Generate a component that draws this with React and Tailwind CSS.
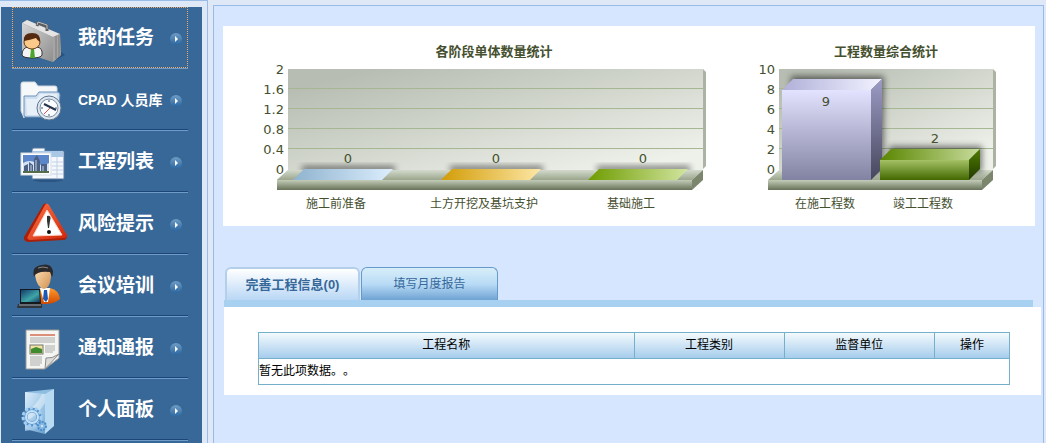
// src/App.jsx
import { useState } from 'react';

const MENU_ITEMS = [
  { label: '我的任务', icon: BriefcaseIcon },
  { label: 'CPAD 人员库', icon: FolderClockIcon, small: true },
  { label: '工程列表', icon: ProjectsIcon },
  { label: '风险提示', icon: WarningIcon },
  { label: '会议培训', icon: MeetingIcon },
  { label: '通知通报', icon: NoticeIcon },
  { label: '个人面板', icon: PanelIcon },
];

const STAGE_CHART = {
  id: 'stage',
  title: '各阶段单体数量统计',
  titleX: 271,
  width: 517,
  wallX: 65,
  wallWidth: 415,
  ticks: ['2', '1.6', '1.2', '0.8', '0.4', '0'],
  max: 2,
  bars: [
    { name: '施工前准备', value: 0, x: 70, top: ['#8fb3cf', '#dceefd'] },
    { name: '土方开挖及基坑支护', value: 0, x: 218, top: ['#d29c06', '#fde7a6'] },
    { name: '基础施工', value: 0, x: 365, top: ['#6f9c00', '#d2e5a0'] },
  ],
};

const PROJECT_CHART = {
  id: 'project',
  title: '工程数量综合统计',
  titleX: 146,
  width: 295,
  wallX: 39,
  wallWidth: 214,
  ticks: ['10', '8', '6', '4', '2', '0'],
  max: 10,
  bars: [
    {
      name: '在施工程数', value: 9, x: 42,
      top: ['#b0b0da', '#f2f2ff'], front: ['#e3e3ff', '#8282a2'], side: ['#9c9cc6', '#46465c'],
    },
    {
      name: '竣工工程数', value: 2, x: 140,
      top: ['#5a8600', '#c8dc9c'], front: ['#a5c266', '#436800'], side: ['#4f7c00', '#223900'],
    },
  ],
};

const COLUMNS = [
  { title: '工程名称', width: 'w-[50%]' },
  { title: '工程类别', width: 'w-[20%]' },
  { title: '监督单位', width: 'w-[20%]' },
  { title: '操作', width: 'w-[10%]' },
];

// --- Menu icons ---
function BriefcaseIcon() {
  return (
    <svg viewBox="0 0 52 60" className="w-[52px] h-[60px] shrink-0" aria-hidden="true">
      <defs>
        <linearGradient id="case" x1="0" y1="0" x2="1" y2="1">
          <stop offset="0" stopColor="#d6d6d6" />
          <stop offset="1" stopColor="#8e8e8e" />
        </linearGradient>
      </defs>
      <path d="M38 52 L49 46 L44 42Z" fill="#1d4470" opacity="0.6" />
      <path d="M6 14 L11 11 L44 25 L45 46 L37 53 L6 43Z" fill="#777" />
      <path d="M6 14 L37 28 L37 53 L6 43Z" fill="url(#case)" />
      <path d="M6 14 L11 11 L44 25 L37 28Z" fill="#e4e4e4" />
      <path d="M37 28 L44 25 L45 46 L37 53Z" fill="#a5a5a5" />
      <path d="M40 27 L40 50 M43 26 L43 48" stroke="#7c7c7c" strokeWidth="1" />
      <path d="M21 17 L22 14 L31 17 L31 22" fill="none" stroke="#5e5e5e" strokeWidth="3" />
      <path d="M21 16 L22 13 L31 16 L31 20" fill="none" stroke="#bdbdbd" strokeWidth="1" />
      <path d="M6 46 Q6 39 12 38 L21 38 Q27 39 26 46 Q25 49 16 49 Q7 49 6 46Z" fill="#f4f4f4" stroke="#333" strokeWidth="1" />
      <path d="M15 40 H18 L19 49 H14Z" fill="#4aa52a" />
      <ellipse cx="16" cy="33" rx="8" ry="7" fill="#fbc98a" stroke="#6b3b14" strokeWidth="1" />
      <path d="M8 32 Q7 24 16 24 Q25 24 24 33 Q21 31 20 29 Q14 31 8 32Z" fill="#54290f" />
    </svg>
  );
}

function FolderClockIcon() {
  return (
    <svg viewBox="0 0 52 60" className="w-[52px] h-[60px] shrink-0" aria-hidden="true">
      <path d="M5 40 L5 13 Q5 11 7 11 L19 11 L22 15 L39 15 Q41 15 41 17 L41 24 L10 27 L8 47Z" fill="#f7f8fa" stroke="#cfd6df" />
      <path d="M8 25 L20 25 L23 21 L41 21 Q44 21 44 24 L42 44 Q42 46 40 46 L10 46 Q8 46 8 44Z" fill="#cfdfef" stroke="#6d92bb" />
      <path d="M10 28 L21 28 L24 23 L41 23 L40 44 L11 44Z" fill="#e7f0f9" />
      <circle cx="33" cy="37" r="12" fill="#dfe5ec" stroke="#5c7590" />
      <circle cx="33" cy="37" r="9" fill="#fafcff" stroke="#7890a8" />
      <path d="M33 29 V31 M33 43 V45 M25 37 H27 M39 37 H41" stroke="#456" strokeWidth="1" />
      <path d="M28 33 L40 39" stroke="#26354a" strokeWidth="2" />
      <path d="M34 37 L28 43" stroke="#e05050" strokeWidth="1" />
    </svg>
  );
}

function ProjectsIcon() {
  return (
    <svg viewBox="0 0 52 60" className="w-[52px] h-[60px] shrink-0" aria-hidden="true">
      <ellipse cx="32" cy="47" rx="15" ry="2" fill="#1d4470" opacity="0.5" />
      <path d="M16 46 V17 Q16 15 18 15 H29 V18 H48 V46Z" fill="#f5f8fc" stroke="#53759c" />
      <path d="M17 18 H47 V24 H17Z" fill="#a9c7e6" />
      <path d="M36 29 H47 M36 33 H47 M36 37 H47 M36 41 H47 M41 24 V45" stroke="#c3d2e3" strokeWidth="1" />
      <rect x="5" y="20" width="30" height="22" fill="#fff" stroke="#d5dbe2" />
      <rect x="7" y="22" width="26" height="18" fill="#5b86ca" />
      <path d="M7 30 Q14 26 20 30 T33 30 V38 H7Z" fill="#d4e2f4" />
      <path d="M8 39 V33 L12 31 V39Z M13 39 V29 L17 32 V39Z M18 39 V26 L21 22 L24 28 V39Z M25 39 V31 H31 V39Z" fill="#4a6184" />
      <path d="M20 27 V38 M15 32 V38 M27 33 V38" stroke="#c5d3e6" />
      <path d="M7 38 H33 V40 H7Z" fill="#536c4a" />
    </svg>
  );
}

function WarningIcon() {
  return (
    <svg viewBox="0 0 52 60" className="w-[52px] h-[60px] shrink-0" aria-hidden="true">
      <defs>
        <linearGradient id="warn" x1="0" y1="0" x2="1" y2="1">
          <stop offset="0" stopColor="#ff7448" />
          <stop offset="1" stopColor="#cf2608" />
        </linearGradient>
      </defs>
      <path d="M27 10 Q29 7 32 10 L51 41 Q51 45 47 45 L12 47 Q7 46 8 42Z" fill="#a91f08" />
      <path d="M29 10 Q31 7 33 10 L51 40 Q51 43 48 43 L14 45 Q10 44 12 41Z" fill="url(#warn)" />
      <path d="M31 15 L46 40 L17 41Z" fill="#fff" stroke="#ffd4c6" strokeWidth="1" strokeLinejoin="round" />
      <path d="M31 21 Q36 20 34 26 L33 33 H32 L31 26Z" fill="#333" />
      <ellipse cx="33" cy="37" rx="2" ry="2" fill="#111" />
    </svg>
  );
}

function MeetingIcon() {
  return (
    <svg viewBox="0 0 52 60" className="w-[52px] h-[60px] shrink-0" aria-hidden="true">
      <defs>
        <linearGradient id="face" x1="0" y1="0" x2="1" y2="1">
          <stop offset="0" stopColor="#ffe3bb" />
          <stop offset="1" stopColor="#d08f4e" />
        </linearGradient>
        <linearGradient id="suit" x1="0" y1="0" x2="0" y2="1">
          <stop offset="0" stopColor="#ff9a2c" />
          <stop offset="1" stopColor="#d04a00" />
        </linearGradient>
        <linearGradient id="screen" x1="0" y1="0" x2="1" y2="1">
          <stop offset="0" stopColor="#123c6e" />
          <stop offset="0.6" stopColor="#3fa6a8" />
          <stop offset="1" stopColor="#12385e" />
        </linearGradient>
      </defs>
      <path d="M17 46 Q17 32 26 31 H34 Q43 33 44 42 Q39 47 28 47Z" fill="url(#suit)" />
      <path d="M24 31 L34 31 L32 45 L28 45Z" fill="#fff" />
      <path d="M28 33 H31 L32 42 L30 45 L27 42Z" fill="#1d58b2" />
      <path d="M19 18 Q20 10 28 10 Q36 11 35 20 Q34 31 28 32 Q21 31 19 18Z" fill="url(#face)" />
      <path d="M18 20 Q15 9 26 8 Q35 6 37 14 Q37 18 36 20 L34 15 Q26 14 22 16 Q19 17 18 20Z" fill="#2a2a2d" />
      <path d="M22 11 Q27 9 32 11" stroke="#888" fill="none" />
      <path d="M4 32 H24 L25 47 H4Z" fill="#15181c" />
      <path d="M5 33 H23 L24 45 H5Z" fill="url(#screen)" />
      <path d="M2 47 H26 V51 H1Z" fill="#30353b" />
      <path d="M3 48 H25" stroke="#9ba3ab" />
    </svg>
  );
}

function NoticeIcon() {
  return (
    <svg viewBox="0 0 52 60" className="w-[52px] h-[60px] shrink-0" aria-hidden="true">
      <path d="M10 11 H43 V39 L29 50 H10Z" fill="#f5f5f2" stroke="#9a9a98" />
      <path d="M14 16 H39" stroke="#dc8f7b" strokeWidth="2" />
      <path d="M14 19 H39 M14 21 H39 M14 23 H39 M29 27 H39 M29 29 H39 M29 31 H39 M29 33 H37 M14 38 H26 M14 40 H26 M14 42 H26 M14 44 H26 M14 46 H24" stroke="#ababab" strokeWidth="1" />
      <rect x="14" y="26" width="13" height="9" fill="#f0e3a0" stroke="#777" />
      <path d="M15 30 L20 28 L26 30 V34 H15Z" fill="#3f8b2e" />
      <path d="M29 50 L30 39 Q36 40 43 35Z" fill="#dcdcda" stroke="#8b8b8b" />
    </svg>
  );
}

function PanelIcon() {
  return (
    <svg viewBox="0 0 52 60" className="w-[52px] h-[60px] shrink-0" aria-hidden="true">
      <defs>
        <linearGradient id="glass" x1="0" y1="0" x2="1" y2="1">
          <stop offset="0" stopColor="#e8f5ff" />
          <stop offset="1" stopColor="#72abd9" />
        </linearGradient>
      </defs>
      <path d="M9 11 L38 8 V45 L9 50Z" fill="#8ebde2" />
      <path d="M9 11 L29 13 V53 L9 48Z" fill="url(#glass)" opacity="0.85" />
      <path d="M29 13 L38 8 V45 L29 53Z" fill="#b8daf3" />
      <path d="M10 30 Q20 26 26 13 L29 13 V22 Q20 36 10 40Z" fill="#fff" opacity="0.4" />
      <circle cx="16" cy="36" r="7" fill="none" stroke="#5793cd" strokeWidth="5" />
      <circle cx="16" cy="36" r="9" fill="none" stroke="#a7d0f0" strokeWidth="3" strokeDasharray="3 2" />
      <circle cx="16" cy="36" r="6" fill="none" stroke="#c5e2f8" strokeWidth="2" />
      <circle cx="26" cy="45" r="4" fill="#87b9e2" stroke="#4d8bc7" strokeWidth="2" strokeDasharray="2 1" />
      <circle cx="26" cy="45" r="1" fill="#e1f0fb" />
    </svg>
  );
}

const ArrowBadge = () => (
  <svg viewBox="0 0 12 12" className="w-3 h-3 shrink-0" aria-hidden="true">
    <defs>
      <linearGradient id="badge" x1="0" y1="0" x2="0" y2="1">
        <stop offset="0" stopColor="#6f9cc4" />
        <stop offset="1" stopColor="#2b67a2" />
      </linearGradient>
    </defs>
    <circle cx="6" cy="6" r="6" fill="url(#badge)" />
    <path d="M5 3 L8 6 L5 9Z" fill="#fff" />
  </svg>
);

// --- 3D column chart ---
const DEPTH = 11;
const WALL_TOP = 43;
const FLOOR_Y = 154;
const BAR_WIDTH = 89;

const Gradient = ({ id, colors, horizontal }) => (
  <linearGradient id={id} x1="0" y1="0" x2={horizontal ? 1 : 0} y2={horizontal ? 0 : 1}>
    <stop offset="0" stopColor={colors[0]} />
    <stop offset="1" stopColor={colors[1]} />
  </linearGradient>
);

function Bar({ id, bar, max }) {
  const y = FLOOR_Y - (bar.value / max) * 100;
  const right = bar.x + BAR_WIDTH;
  const tall = bar.value / max > 0.8;
  return (
    <g>
      <defs>
        <Gradient id={`${id}-top`} colors={bar.top} horizontal />
        {bar.front && <Gradient id={`${id}-front`} colors={bar.front} />}
        {bar.side && <Gradient id={`${id}-side`} colors={bar.side} />}
      </defs>
      <rect x={bar.x + 9} y={y - 14} width={BAR_WIDTH + 4} height={FLOOR_Y - y + 6} fill="#000" opacity="0.5" filter="url(#softShadow)" />
      {!bar.front && (
        <path d={`M${bar.x - 16} ${FLOOR_Y} l${DEPTH} -10 H${right + 21} l-${DEPTH} 10Z`} fill="url(#floor)" />
      )}
      <path d={`M${bar.x} ${y} l${DEPTH} -${DEPTH} H${right + DEPTH} L${right} ${y}Z`} fill={`url(#${id}-top)`} />
      {bar.front && (
        <>
          <rect x={bar.x} y={y} width={BAR_WIDTH} height={FLOOR_Y - y} fill={`url(#${id}-front)`} />
          <path d={`M${right} ${y} l${DEPTH} -${DEPTH} V${FLOOR_Y - DEPTH} L${right} ${FLOOR_Y}Z`} fill={`url(#${id}-side)`} />
        </>
      )}
      <text x={bar.x + (tall ? 44 : 55)} y={tall ? y + 16 : y - 17} textAnchor="middle" className="text-[13px]">{bar.value}</text>
      <text x={bar.x + 43} y="182" textAnchor="middle" className="text-[12px]">{bar.name}</text>
    </g>
  );
}

function ColumnChart({ id, title, titleX, width, wallX, wallWidth, ticks, max, bars }) {
  const wallRight = wallX + wallWidth;
  const left = wallX - DEPTH;
  const right = wallRight - DEPTH;
  return (
    <svg
      viewBox={`0 0 ${width} 200`}
      role="img"
      aria-label={title}
      className="block w-full fill-[#45502f] font-['DejaVu_Sans','Noto_Sans_CJK_SC',sans-serif]"
    >
      <defs>
        <linearGradient id="wall" x1="0" y1="0" x2="1" y2="1">
          <stop offset="0.1" stopColor="#b7bdb2" />
          <stop offset="0.9" stopColor="#eef1ea" />
        </linearGradient>
        <Gradient id="floor" colors={['#d3dacd', '#9ba68c']} />
        <Gradient id="ledge" colors={['#c3ccb8', '#687258']} />
        <filter id="softShadow" x="-20%" y="-60%" width="140%" height="220%">
          <feGaussianBlur stdDeviation="3" />
        </filter>
      </defs>
      <text x={titleX} y="30" textAnchor="middle" className="text-[13px] font-bold">{title}</text>
      <rect x={wallX} y={WALL_TOP} width={wallWidth} height="101" fill="url(#wall)" />
      <path d={`M${wallRight} ${WALL_TOP} l3 3 V${WALL_TOP + 97} l-3 3Z`} fill="#acb3a5" />
      {[1, 2, 3, 4].map((n) => (
        <rect key={n} x={wallX} y={WALL_TOP - 1 + n * 20} width={wallWidth} height="1" fill="#a6b893" />
      ))}
      {ticks.map((tick, i) => (
        <text key={tick} x={wallX - 4} y={48 + i * 20} textAnchor="end" className="text-[13px]">{tick}</text>
      ))}
      <path d={`M${left} ${FLOOR_Y} L${wallX} 144 H${wallRight} L${right} ${FLOOR_Y}Z`} fill="url(#floor)" />
      {bars.map((bar, i) => (
        <Bar key={bar.name} id={`${id}-${i}`} bar={bar} max={max} />
      ))}
      <rect x={left} y={FLOOR_Y} width={wallWidth} height="10" fill="url(#ledge)" />
      <path d={`M${right} ${FLOOR_Y} L${wallRight} 144 V${FLOOR_Y} L${right} 164Z`} fill="#7b866d" />
    </svg>
  );
}

// --- Sidebar ---
function Sidebar() {
  const [current, setCurrent] = useState(0);
  return (
    <aside className="w-[208px] shrink-0 flex flex-col pt-[6px] pr-[5px] border-t border-r border-[#99bbe8]">
      <nav className="flex-1 ml-px pl-[11px] pr-[14px] bg-[#386898]">
        {MENU_ITEMS.map(({ label, icon: Icon, small }, i) => (
          <div key={label} className="border-b border-[#6f9bc9]">
            <a
              href="#"
              onClick={() => setCurrent(i)}
              className={`flex items-center h-[61px] text-white font-bold ${
                i === current
                  ? 'pt-[2px] pl-[3px] pr-[5px] border border-dotted border-[#f0a860]'
                  : 'pt-[3px] pl-1 pr-[6px] border-b border-[#1c4677]'
              }`}
            >
              <Icon />
              <span className={`flex-1 pl-[10px] whitespace-nowrap ${small ? 'text-[14px]' : 'text-[19px]'}`}>{label}</span>
              <ArrowBadge />
            </a>
          </div>
        ))}
      </nav>
    </aside>
  );
}

// --- Tabs with project table ---
function ProjectTabs() {
  const [active, setActive] = useState(0);
  return (
    <section className="mt-[41px] ml-px">
      <div role="tablist" className="flex gap-px pl-px">
        <button
          role="tab"
          aria-selected={active === 0}
          onClick={() => setActive(0)}
          className="w-[135px] h-[33px] rounded-t-md border-2 border-b-0 border-[#b3cfea] bg-linear-to-b from-white to-[#b9d7f5] text-[13px] font-bold text-[#36689a]"
        >
          完善工程信息(0)
        </button>
        <button
          role="tab"
          aria-selected={active === 1}
          onClick={() => setActive(1)}
          className="w-[137px] h-[33px] rounded-t-md border border-b-0 border-[#6699cc] bg-linear-to-b from-[#d7eef8] via-[#b9dbf6] to-[#6fa3d3] text-[12px] text-[#36689a]"
        >
          填写月度报告
        </button>
      </div>
      <div className="h-[7px] mr-[10px] bg-[#a8d0f0]" />
      <div className="mr-[2px] pt-[25px] pb-[10px] pl-[34px] pr-[31px] bg-white">
        <table className="w-full table-fixed border-collapse text-[12px] text-black [font-kerning:none] [text-spacing-trim:space-all]">
          <thead>
            <tr className="h-[26px] bg-linear-to-b from-[#f4fafd] to-[#a3cbeb]">
              {COLUMNS.map((col) => (
                <th key={col.title} className={`${col.width} border border-[#74afcb] p-0 pb-[2px] font-normal`}>{col.title}</th>
              ))}
            </tr>
          </thead>
          <tbody>
            <tr className="h-[26px]">
              <td colSpan={4} className="border border-[#74afcb] p-0 pb-[2px]">暂无此项数据。。</td>
            </tr>
          </tbody>
        </table>
      </div>
    </section>
  );
}

export default function App() {
  return (
    <div className="flex min-h-screen bg-[#dfe8f6] font-['Liberation_Sans','Noto_Sans_CJK_SC',sans-serif]">
      <Sidebar />
      <main className="flex-1 min-w-0 mt-[5px] ml-[5px] mr-[2px] pt-5 pl-[9px] border border-b-0 border-[#99bbe8] bg-[#d6e6ff]">
        <div className="grid grid-cols-[517fr_295fr] mr-2 bg-white">
          <ColumnChart {...STAGE_CHART} />
          <ColumnChart {...PROJECT_CHART} />
        </div>
        <ProjectTabs />
      </main>
    </div>
  );
}
